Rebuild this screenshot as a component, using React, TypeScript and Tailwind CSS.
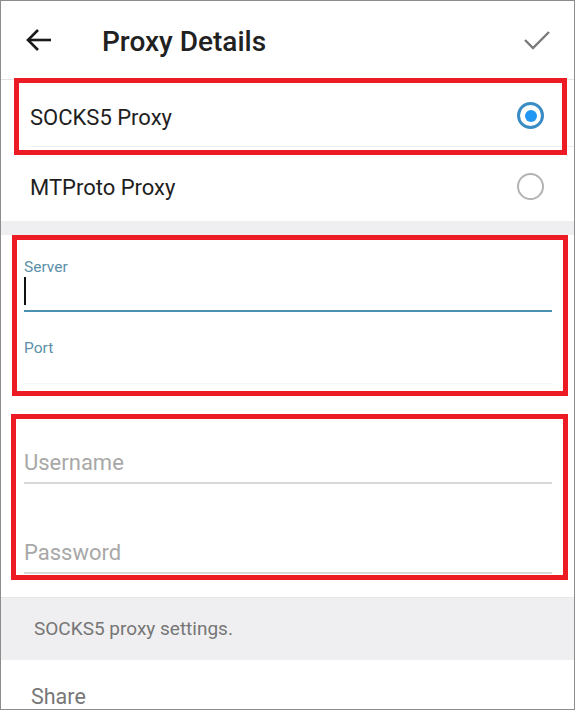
import React from "react";

function RedBox({ className }: { className: string }) {
  return <div className={`pointer-events-none absolute border-[5px] border-[#ed1c24] ${className}`} />;
}

export default function App() {
  return (
    <div className="w-[575px] h-[710px] overflow-hidden border border-[#8c8c8c] bg-white font-['Roboto',sans-serif] box-border">
      {/* Header */}
      <div className="flex h-[79px] items-center border-b border-[#e4e4e4]">
        <div className="ml-[25px] flex h-[24px] w-[26px] items-center">
          <svg width="26" height="24" viewBox="0 0 26 24" fill="none">
            <path d="M2 12H25" stroke="#1a1a1a" strokeWidth="2.6" />
            <path d="M12 2L2 12L12 22" stroke="#1a1a1a" strokeWidth="2.6" strokeLinejoin="miter" />
          </svg>
        </div>
        <div className="ml-[50px] pt-[3px] text-[28px] font-medium leading-none text-[#212121]">Proxy Details</div>
        <div className="ml-auto mr-[24px] flex items-center">
          <svg width="26" height="20" viewBox="0 0 26 20" fill="none">
            <path d="M1 10L9 18L25 2" stroke="#7a7a7a" strokeWidth="2.4" />
          </svg>
        </div>
      </div>

      {/* Radio rows */}
      <div className="relative">
        <div className="flex h-[66px] items-center pt-[5px] pl-[29px] pr-[30px]">
          <span className="pt-[4px] text-[22px] text-[#1e1e1e]">SOCKS5 Proxy</span>
          <div className="ml-auto flex h-[27px] w-[27px] items-center justify-center rounded-full border-[3.5px] border-[#3a8cc4]">
            <div className="h-[12px] w-[12px] rounded-full bg-[#2196f3]" />
          </div>
        </div>
        <div className="ml-[30px] h-px bg-[#eeeeee]" />
        <div className="h-[4px]" />
        <RedBox className="-top-[2px] -bottom-[4px] left-[13px] right-[7px]" />
      </div>
      <div className="flex h-[70px] items-center pl-[29px] pr-[30px]">
        <span className="pt-[3px] text-[22px] text-[#1e1e1e]">MTProto Proxy</span>
        <div className="ml-auto h-[27px] w-[27px] rounded-full border-[2.5px] border-[#b3b3b3]" />
      </div>

      <div className="h-[14px] bg-[#efeff1]" />

      {/* Server / Port */}
      <div className="relative pl-[23px] pr-[22px] pt-[24px] pb-[12px]">
        <div className="text-[15.5px] leading-[17px] text-[#5b8fa8]">Server</div>
        <div className="mt-[1px] h-[28px] w-[2px] bg-[#111]" />
        <div className="mt-[5px] h-[2px] bg-[#4a90b2]" />
        <div className="mt-[28px] text-[15.5px] leading-[17px] text-[#5b8fa8]">Port</div>
        <div className="mt-[26px] h-px bg-[#f6f6f6]" />
        <RedBox className="top-0 bottom-0 left-[11px] right-[6px]" />
      </div>

      {/* Username / Password */}
      <div className="relative mt-[18px] pl-[23px] pr-[22px] pt-[37px] pb-[6px]">
        <div className="text-[22px] leading-[24px] text-[#a8a8a8]">Username</div>
        <div className="mt-[7px] h-[2px] bg-[#d8d8d8]" />
        <div className="mt-[57px] text-[22px] leading-[24px] text-[#a8a8a8]">Password</div>
        <div className="mt-[7px] h-[2px] bg-[#d8d8d8]" />
        <RedBox className="top-0 bottom-0 left-[10px] right-[6px]" />
      </div>

      {/* Info */}
      <div className="mt-[17px] flex h-[63px] items-center border-t border-[#e8e8ea] bg-[#efeff1] pl-[33px]">
        <span className="text-[19px] text-[#767676]">SOCKS5 proxy settings.</span>
      </div>

      <div className="pl-[30px] pt-[25px]">
        <div className="text-[21.5px] leading-[24px] text-[#777]">Share</div>
      </div>
    </div>
  );
}
